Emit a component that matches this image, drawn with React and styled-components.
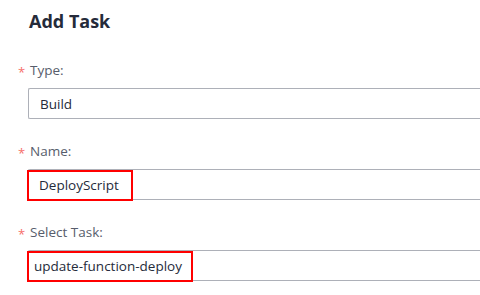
import React from 'react';
import styled, { createGlobalStyle } from 'styled-components';

const GlobalStyle = createGlobalStyle`
  html, body {
    margin: 0;
    padding: 0;
    background: #ffffff;
  }
  body {
    font-family: "Open Sans", "Noto Sans", Arial, sans-serif;
    width: 480px;
    height: 295px;
    overflow: hidden;
  }
`;

const Panel = styled.div`
  padding: 8px 0 0 18px;
`;

const Title = styled.h2`
  margin: 0 0 0 11px;
  font-size: 18px;
  line-height: 26px;
  font-weight: 700;
  color: #252b3a;
`;

const Field = styled.div`
  margin-top: ${(p) => p.$top}px;
`;

const Label = styled.div`
  display: flex;
  align-items: center;
  height: 20px;
  font-size: 13.5px;
  color: #575d6c;
`;

const Star = styled.span`
  color: #f66f6a;
  width: 12px;
  font-size: 13px;
  padding-top: 3px;
`;

const Input = styled.div`
  position: relative;
  margin: 8px 0 0 10px;
  height: 31px;
  box-sizing: border-box;
  border: 1px solid #adb0b8;
  border-right: none;
  border-radius: 2px 0 0 2px;
  display: flex;
  align-items: center;
  padding-left: ${(p) => p.$pad}px;
  font-size: 13.5px;
  color: #252b3a;
`;

const Highlight = styled.span`
  position: absolute;
  left: -2px;
  top: 0;
  width: ${(p) => p.$width}px;
  height: 31px;
  box-sizing: border-box;
  border: 2px solid #ff0000;
  pointer-events: none;
`;

export default function App() {
  return (
    <>
      <GlobalStyle />
      <Panel>
        <Title>Add Task</Title>
        <Field $top={26}>
          <Label>
            <Star>*</Star>Type:
          </Label>
          <Input $pad={11}>Build</Input>
        </Field>
        <Field $top={22}>
          <Label>
            <Star>*</Star>Name:
          </Label>
          <Input $pad={10}>
            DeployScript
            <Highlight $width={106} />
          </Input>
        </Field>
        <Field $top={22}>
          <Label>
            <Star>*</Star>Select Task:
          </Label>
          <Input $pad={5}>
            update-function-deploy
            <Highlight $width={166} />
          </Input>
        </Field>
      </Panel>
    </>
  );
}
